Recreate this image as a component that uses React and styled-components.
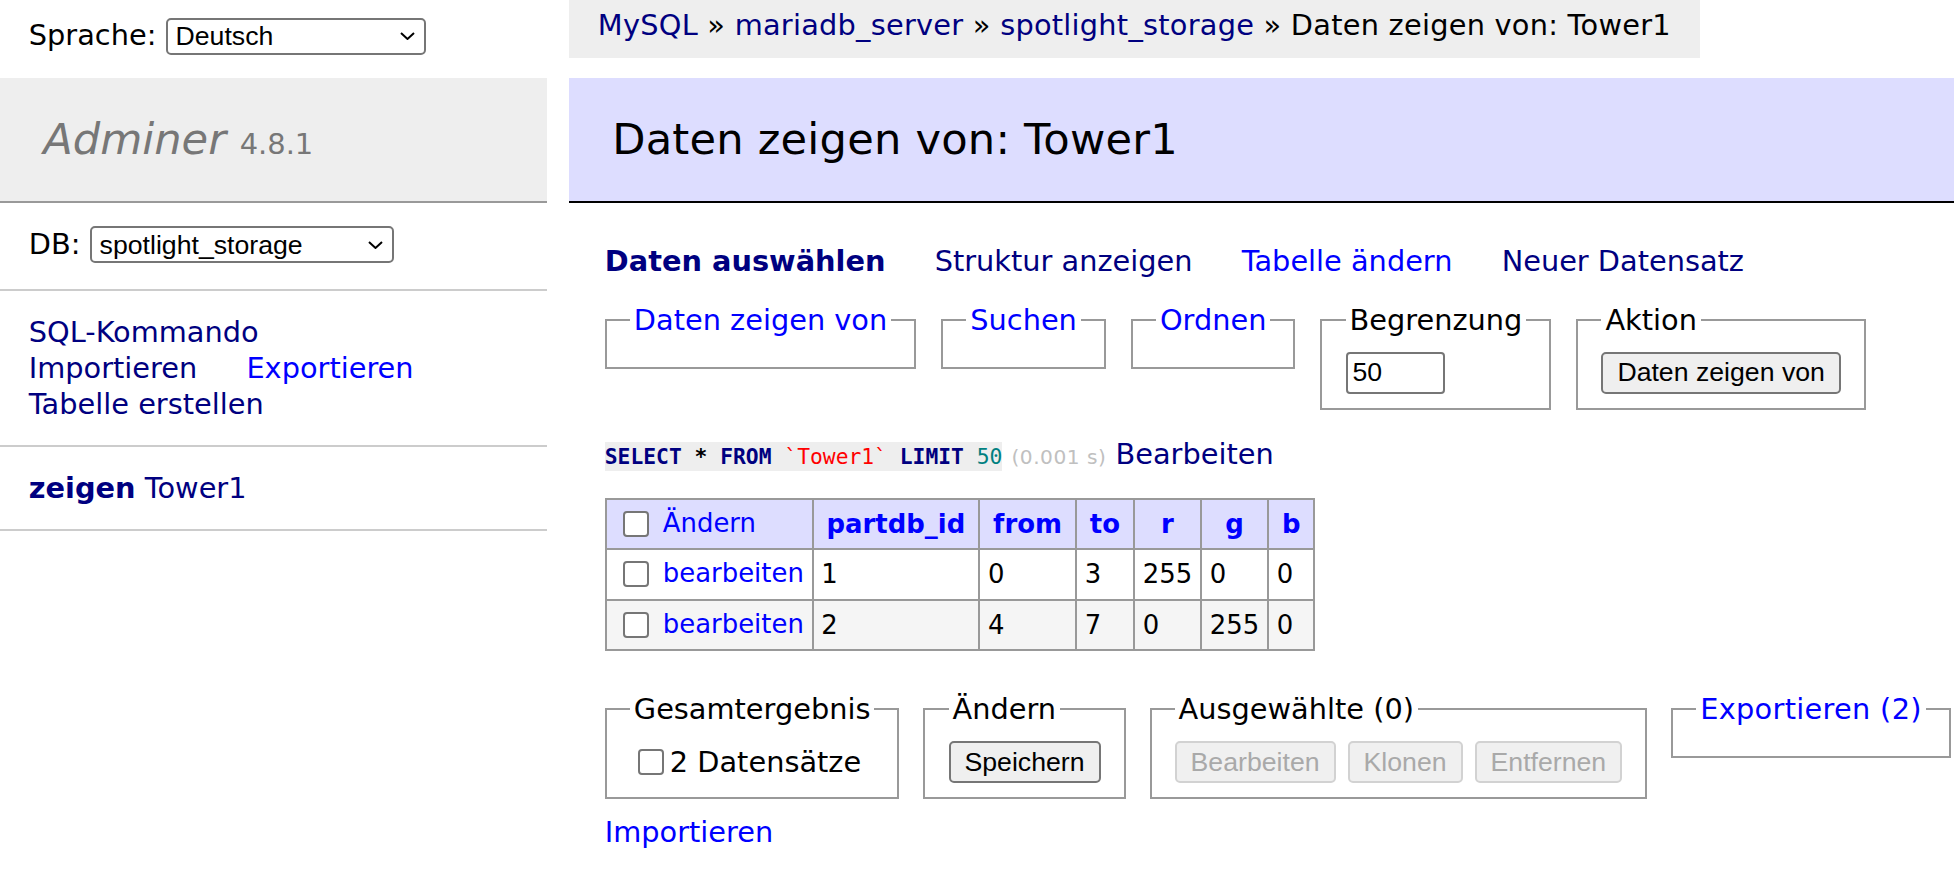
import React from "react";
import styled, { createGlobalStyle } from "styled-components";

const GlobalStyle = createGlobalStyle`
  html, body {
    margin: 0;
    padding: 0;
    background: #fff;
  }
  body {
    color: #000;
    font: 28.8px/1.25 "DejaVu Sans", Verdana, sans-serif;
  }
`;

const columns = ["partdb_id", "from", "to", "r", "g", "b"];

const rows = [
  { id: 1, from: 0, to: 3, r: 255, g: 0, b: 0 },
  { id: 2, from: 4, to: 7, r: 0, g: 255, b: 0 },
];

export default function App() {
  return (
    <>
      <GlobalStyle />
      <Page>
        <Lang>
          Sprache:{" "}
          <SelectBox width={260} value="Deutsch" />
        </Lang>

        <Breadcrumb>
          <Link $visited href="#">MySQL</Link> »{" "}
          <Link $visited href="#">mariadb_server</Link> »{" "}
          <Link $visited href="#">spotlight_storage</Link> » Daten zeigen von: Tower1
        </Breadcrumb>

        <Menu>
          <Logo>
            <LogoLink href="#">Adminer</LogoLink> <Version>4.8.1</Version>
          </Logo>
          <DbSection>
            DB:{" "}
            <SelectBox width={304} value="spotlight_storage" />
          </DbSection>
          <MenuSection>
            <MenuLine>
              <MenuLink $visited href="#">SQL-Kommando</MenuLink>
            </MenuLine>
            <MenuLine>
              <MenuLink $visited href="#">Importieren</MenuLink>{" "}
              <MenuLink href="#">Exportieren</MenuLink>
            </MenuLine>
            <MenuLine>
              <MenuLink $visited href="#">Tabelle erstellen</MenuLink>
            </MenuLine>
          </MenuSection>
          <MenuSection>
            <Link $visited $active href="#">zeigen</Link>{" "}
            <Link $visited href="#">Tower1</Link>
          </MenuSection>
        </Menu>

        <Main>
          <Title>Daten zeigen von: Tower1</Title>
          <Content>
            <TabLinks>
              <TabLink $visited $active href="#">Daten auswählen</TabLink>{" "}
              <TabLink $visited href="#">Struktur anzeigen</TabLink>{" "}
              <TabLink href="#">Tabelle ändern</TabLink>{" "}
              <TabLink $visited href="#">Neuer Datensatz</TabLink>
            </TabLinks>

            <FieldsetRow $top={23.04} $gap={25}>
              <Fieldset>
                <Legend><Link href="#">Daten zeigen von</Link></Legend>
              </Fieldset>
              <Fieldset>
                <Legend><Link href="#">Suchen</Link></Legend>
              </Fieldset>
              <Fieldset>
                <Legend><Link href="#">Ordnen</Link></Legend>
              </Fieldset>
              <Fieldset>
                <Legend>Begrenzung</Legend>
                <FieldBody>
                  <TextInput type="text" defaultValue="50" />
                </FieldBody>
              </Fieldset>
              <Fieldset>
                <Legend>Aktion</Legend>
                <FieldBody>
                  <Button type="button">Daten zeigen von</Button>
                </FieldBody>
              </Fieldset>
            </FieldsetRow>

            <Query>
              <Code>
                <Keyword>SELECT</Keyword> <Op>*</Op> <Keyword>FROM</Keyword>{" "}
                <Ident>`Tower1`</Ident> <Keyword>LIMIT</Keyword> <Num>50</Num>
              </Code>{" "}
              <Time>(0.001 s)</Time> <Link $visited href="#">Bearbeiten</Link>
            </Query>

            <DataTable>
              <thead>
                <tr>
                  <Cell $head>
                    <Checkbox />{" "}
                    <Link href="#">Ändern</Link>
                  </Cell>
                  {columns.map((c) => (
                    <HeadCell key={c}>
                      <Link $active href="#">{c}</Link>
                    </HeadCell>
                  ))}
                </tr>
              </thead>
              <tbody>
                {rows.map((row, i) => (
                  <Row key={row.id} $alt={i % 2 === 1}>
                    <Cell>
                      <Checkbox />{" "}
                      <Link href="#">bearbeiten</Link>
                    </Cell>
                    <Cell>{row.id}</Cell>
                    <Cell>{row.from}</Cell>
                    <Cell>{row.to}</Cell>
                    <Cell>{row.r}</Cell>
                    <Cell>{row.g}</Cell>
                    <Cell>{row.b}</Cell>
                  </Row>
                ))}
              </tbody>
            </DataTable>

            <Footer>
              <FieldsetRow $gap={24}>
                <Fieldset>
                  <Legend>Gesamtergebnis</Legend>
                  <FieldBody>
                    <CheckLabel>
                      <Checkbox />2 Datensätze
                    </CheckLabel>
                  </FieldBody>
                </Fieldset>
                <Fieldset>
                  <Legend>Ändern</Legend>
                  <FieldBody>
                    <Button type="button">Speichern</Button>
                  </FieldBody>
                </Fieldset>
                <Fieldset>
                  <Legend>Ausgewählte (0)</Legend>
                  <FieldBody>
                    <Button type="button" disabled>Bearbeiten</Button>
                    <Button type="button" disabled>Klonen</Button>
                    <Button type="button" disabled>Entfernen</Button>
                  </FieldBody>
                </Fieldset>
                <Fieldset>
                  <Legend $spaced><Link href="#">Exportieren (2)</Link></Legend>
                </Fieldset>
              </FieldsetRow>
            </Footer>

            <ImportLine>
              <Link href="#">Importieren</Link>
            </ImportLine>
          </Content>
        </Main>
      </Page>
    </>
  );
}

function SelectBox({ width, value }) {
  return (
    <SelectWrap>
      <Select $w={width} defaultValue={value}>
        <option>{value}</option>
      </Select>
      <Chevron viewBox="0 0 15 8">
        <path d="M1 1 L7.5 7 L14 1" fill="none" stroke="#000" strokeWidth="2" />
      </Chevron>
    </SelectWrap>
  );
}

const Page = styled.div`
  display: grid;
  grid-template-columns: 547px 1fr;
  grid-template-rows: 77.6px auto;
  column-gap: 22px;
  min-height: 873px;
`;

const Link = styled.a`
  color: ${(p) => (p.$visited ? "#000080" : "#0000ff")};
  font-weight: ${(p) => (p.$active ? "bold" : "normal")};
  text-decoration: none;
`;

const Lang = styled.div`
  padding: 10px 28.8px 7px;
  line-height: 51.84px;
  white-space: nowrap;
`;

const SelectWrap = styled.span`
  position: relative;
  display: inline-block;
  line-height: normal;
`;

const Select = styled.select`
  appearance: none;
  box-sizing: border-box;
  width: ${(p) => p.$w}px;
  height: 37px;
  margin: 0;
  padding: 0 32px 0 8px;
  border: 2px solid #767676;
  border-radius: 5px;
  background: #fff;
  color: #000;
  font: 26.67px "Liberation Sans", Arial, sans-serif;
`;

const Chevron = styled.svg`
  position: absolute;
  right: 11px;
  top: 50%;
  width: 15px;
  height: 8px;
  margin-top: -4px;
  pointer-events: none;
`;

const Breadcrumb = styled.div`
  align-self: start;
  justify-self: start;
  box-sizing: border-box;
  height: 57.6px;
  padding: 0 28.8px;
  line-height: 51.84px;
  letter-spacing: 0.25px;
  background: #eee;
  white-space: nowrap;
`;

const Menu = styled.nav`
  display: flex;
  flex-direction: column;
`;

const Logo = styled.h1`
  margin: 0;
  padding: 34.56px 43.2px;
  font-size: 43.2px;
  line-height: 54px;
  font-weight: normal;
  font-style: italic;
  background: #eee;
  border-bottom: 2px solid #999;
  white-space: nowrap;
`;

const LogoLink = styled.a`
  color: #777;
  text-decoration: none;
`;

const Version = styled.span`
  color: #777;
  font-size: 28.94px;
  line-height: 1;
  font-style: normal;
`;

const MenuSection = styled.div`
  padding: 23.04px 28.8px;
  border-bottom: 2px solid #ccc;
  line-height: 36px;
  white-space: nowrap;
`;

const DbSection = styled(MenuSection)`
  padding-bottom: 26px;
`;

const MenuLine = styled.div`
  height: 36px;
`;

const MenuLink = styled(Link)`
  margin-right: 40px;
`;

const Main = styled.main`
  min-width: 0;
`;

const Title = styled.h2`
  margin: 0 0 40px;
  padding: 34.56px 43.2px;
  font-size: 43.2px;
  line-height: 54px;
  font-weight: normal;
  letter-spacing: 0.2px;
  background: #ddf;
  border-bottom: 2px solid #000;
  white-space: nowrap;
`;

const Content = styled.div`
  padding-left: 35.8px;
`;

const TabLinks = styled.p`
  margin: 0;
  line-height: 36px;
  white-space: nowrap;
`;

const TabLink = styled(Link)`
  margin-right: 40px;
`;

const FieldsetRow = styled.div`
  display: flex;
  align-items: flex-start;
  gap: ${(p) => p.$gap}px;
  margin-top: ${(p) => p.$top || 0}px;
`;

const Fieldset = styled.fieldset`
  margin: 0;
  padding: 14.4px 23.04px;
  border: 2px solid #999;
  min-width: 0;
  white-space: nowrap;
`;

const Legend = styled.legend`
  padding: 0 4px;
  line-height: 36px;
  letter-spacing: ${(p) => (p.$spaced ? "0.3px" : "normal")};
`;

const FieldBody = styled.div`
  display: flex;
  align-items: center;
  gap: 12px;
  min-height: 41.6px;
`;

const TextInput = styled.input`
  box-sizing: border-box;
  width: 99px;
  height: 41.6px;
  margin: 0;
  padding: 0 5px;
  border: 2px solid #767676;
  border-radius: 4px;
  color: #000;
  font: 26.67px "Liberation Sans", Arial, sans-serif;
`;

const Button = styled.button`
  box-sizing: border-box;
  height: 41.6px;
  margin: 0;
  padding: 0 14px;
  border: 2px solid #767676;
  border-radius: 5px;
  background: #efefef;
  color: #000;
  font: 26.67px "Liberation Sans", Arial, sans-serif;

  &:disabled {
    border-color: #d2d2d2;
    background: #f0f0f0;
    color: #a9a9a9;
  }
`;

const Checkbox = styled.input.attrs({ type: "checkbox" })`
  appearance: none;
  box-sizing: border-box;
  width: 26px;
  height: 26px;
  margin: 6px 6px 6px 8px;
  border: 2px solid #767676;
  border-radius: 4px;
  background: #fff;
  vertical-align: middle;
`;

const CheckLabel = styled.label`
  display: flex;
  align-items: center;
  line-height: 36px;
`;

const Query = styled.p`
  margin: 0;
  padding-top: 26px;
  line-height: 36px;
  white-space: nowrap;
`;

const Code = styled.code`
  padding: 2px 0;
  background: #eee;
  font: 21.3px/1 "DejaVu Sans Mono", monospace;
`;

const Keyword = styled.span`
  color: #000080;
  font-weight: bold;
`;

const Op = styled.span`
  font-weight: bold;
`;

const Ident = styled.span`
  color: #f00;
`;

const Num = styled.span`
  color: #008080;
`;

const Time = styled.span`
  color: silver;
  font-size: 20.16px;
  line-height: 1;
  letter-spacing: 0.5px;
`;

const DataTable = styled.table`
  margin-top: 25.8px;
  border-collapse: collapse;
  font-size: 25.92px;
  line-height: 32.4px;
`;

const HeadCell = styled.th`
  padding: 5.18px 12.96px;
  border: 2px solid #999;
  background: #ddf;
  text-align: center;
  white-space: nowrap;
`;

const Cell = styled.td`
  padding: 5.18px 7.78px;
  border: 2px solid #999;
  background: ${(p) => (p.$head ? "#ddf" : "transparent")};
  text-align: left;
  white-space: nowrap;
`;

const Row = styled.tr`
  background: ${(p) => (p.$alt ? "#f5f5f5" : "#fff")};
`;

const Footer = styled.div`
  padding: 40px 0 14.4px;
`;

const ImportLine = styled.div`
  line-height: 36px;
`;
